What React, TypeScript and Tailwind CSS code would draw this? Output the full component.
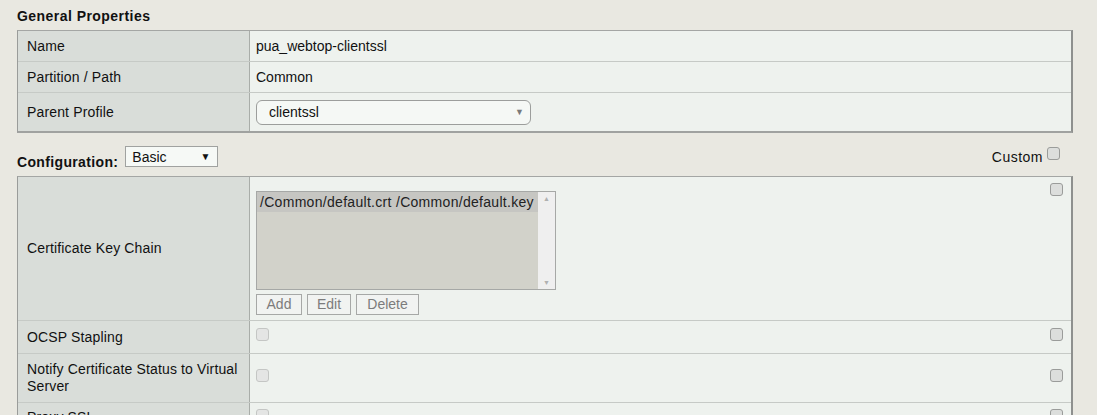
import React from "react";

const Check = ({ light = false }: { light?: boolean }) => (
  <div
    className={
      light
        ? "w-[13px] h-[13px] rounded-[3px] border border-[#c4c6c4] bg-[#e4e5e4]"
        : "w-[13px] h-[13px] rounded-[3px] border border-[#9a9c9a] bg-[#dcdedc]"
    }
  />
);

const Row = ({
  label,
  h,
  children,
  right,
  last = false,
  labelClass = "",
}: {
  label: React.ReactNode;
  h: string;
  children?: React.ReactNode;
  right?: React.ReactNode;
  last?: boolean;
  labelClass?: string;
}) => (
  <div className={`flex ${h} ${last ? "" : "border-b border-[#c6cac6]"}`}>
    <div className={`w-[232px] shrink-0 bg-[#d9ddd9] border-r border-[#a9ada9] pl-[9px] pr-2 flex items-center leading-[17px] tracking-[0.15px] ${labelClass}`}>
      {label}
    </div>
    <div className="flex-1 bg-[#eef2ee] pl-[6px] flex relative">
      <div className="flex-1">{children}</div>
      {right}
    </div>
  </div>
);

export default function App() {
  return (
    <div
      className="w-[1097px] h-[415px] overflow-hidden bg-[#e9e8e1] text-[14px] text-[#111]"
      style={{ fontFamily: '"Liberation Sans", Arial, sans-serif' }}
    >
      <div className="pl-[17px] pr-[24px] pt-[1px]">
        <div className="h-[29px] flex items-center pt-[2px] font-bold tracking-[0.45px] text-[14px]">
          General Properties
        </div>
        <div className="border-t border-[#a4a6a4] border-l border-l-[#9a9c9a] border-r-2 border-r-[#8e908e] border-b-2 border-b-[#a0a2a0]">
          <Row label="Name" h="h-[31px]">
            <div className="h-full flex items-center">pua_webtop-clientssl</div>
          </Row>
          <Row label="Partition / Path" h="h-[31px]">
            <div className="h-full flex items-center">Common</div>
          </Row>
          <Row label="Parent Profile" h="h-[38px]" last>
            <div className="h-full flex items-center">
              <div className="w-[275px] h-[25px] rounded-[6px] border border-[#9c9e9c] bg-[#f5f8f5] flex items-center pl-[12px] pr-[6px] justify-between">
                <span>clientssl</span>
                <span className="text-[#7a7a7a] text-[9px] leading-none">▼</span>
              </div>
            </div>
          </Row>
        </div>

        <div className="h-[43px] flex items-start justify-between">
          <div className="flex items-start">
            <span className="font-bold tracking-[0.35px] leading-[16px] mt-[21px]">Configuration:</span>
            <div className="ml-[7px] mt-[13px] w-[93px] h-[21px] border border-[#a0a2a0] bg-[#f6f9f6] flex items-center justify-between pl-[6px] pr-[7px]">
              <span className="leading-none">Basic</span>
              <span className="text-[10px] leading-none">▼</span>
            </div>
          </div>
          <div className="flex items-start pr-[13px]">
            <span className="mt-[17px] leading-none tracking-[0.5px]">Custom</span>
            <div className="ml-[4px] mt-[14px]">
              <Check />
            </div>
          </div>
        </div>

        <div className="border-t border-[#a4a6a4] border-l border-l-[#9a9c9a] border-r-2 border-r-[#8e908e]">
          <Row
            label="Certificate Key Chain"
            h="h-[144px]"
            right={
              <div className="pt-[6px] pr-[8px]">
                <Check />
              </div>
            }
          >
            <div className="pt-[14px]">
              <div className="w-[300px] h-[99px] border border-[#a6a8a6] bg-[#d2d2ca] flex">
                <div className="flex-1 overflow-hidden">
                  <div className="h-[20px] bg-[#c6c6c2] pl-[3px] flex items-center whitespace-nowrap text-[#222] tracking-[0.3px]">
                    /Common/default.crt /Common/default.key
                  </div>
                </div>
                <div className="w-[17px] bg-[#efefef] flex flex-col justify-between items-center py-[3px] text-[#b0b0b0] text-[7px] leading-none">
                  <span>▲</span>
                  <span>▼</span>
                </div>
              </div>
              <div className="flex gap-[5px] mt-[4px]">
                {["Add", "Edit", "Delete"].map((b, i) => (
                  <div
                    key={b}
                    className={`h-[21px] border border-[#a6a8a6] bg-[#f1f3f1] text-[#7c7c7c] flex items-center justify-center ${
                      i === 0 ? "w-[46px]" : i === 1 ? "w-[44px]" : "w-[63px]"
                    }`}
                  >
                    {b}
                  </div>
                ))}
              </div>
            </div>
          </Row>
          <Row
            label="OCSP Stapling"
            h="h-[33px]"
            right={
              <div className="pt-[7px] pr-[8px]">
                <Check />
              </div>
            }
          >
            <div className="pt-[7px]">
              <Check light />
            </div>
          </Row>
          <Row
            label={
              <span>
                Notify Certificate Status to Virtual
                <br />
                Server
              </span>
            }
            h="h-[49px]"
            right={
              <div className="pt-[15px] pr-[8px]">
                <Check />
              </div>
            }
          >
            <div className="pt-[15px]">
              <Check light />
            </div>
          </Row>
          <Row
            label="Proxy SSL"
            h="h-[33px]"
            labelClass="!items-start pt-[6px]"
            last
            right={
              <div className="pt-[6px] pr-[8px]">
                <Check />
              </div>
            }
          >
            <div className="pt-[6px]">
              <Check light />
            </div>
          </Row>
        </div>
      </div>
    </div>
  );
}
